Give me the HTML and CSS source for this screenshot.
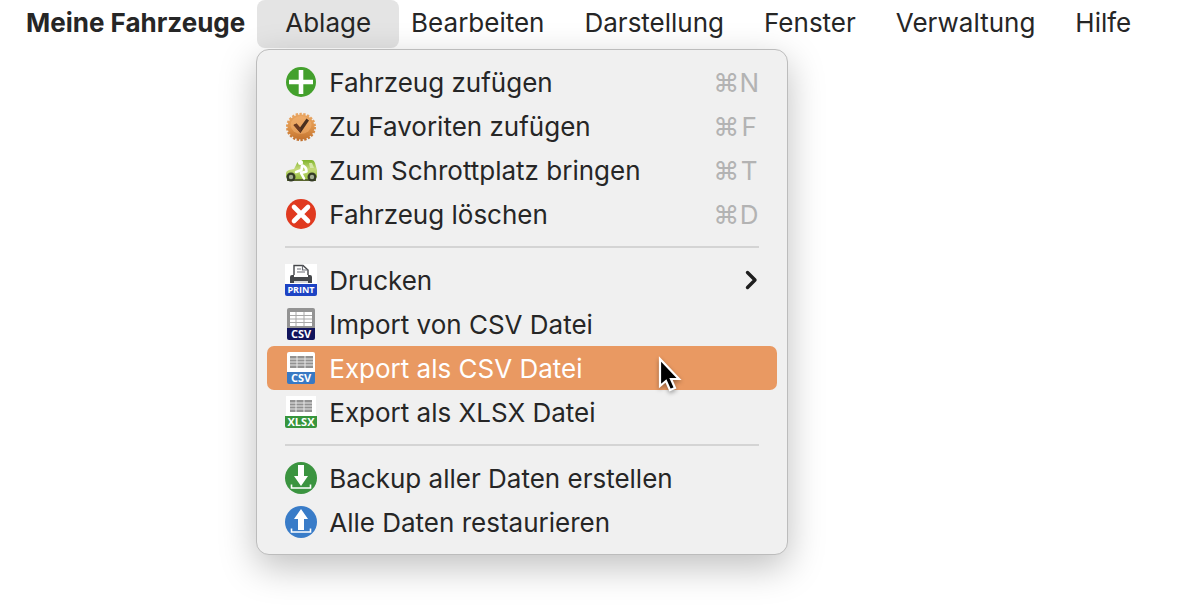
FILE: index.html
```
<!DOCTYPE html>
<html lang="de">
<head>
    <meta charset="UTF-8">
    <title>Meine Fahrzeuge</title>
    <link rel="stylesheet" href="styles.css">
</head>
<body>
    <nav class="menubar">
        <button class="menubar-item app-name">Meine Fahrzeuge</button>
        <div class="menu-anchor">
            <button class="menubar-item open" aria-haspopup="true" aria-expanded="true">Ablage</button>
            <div class="menu" role="menu">
                <button class="menu-item" role="menuitem">
                    <svg class="icon" viewBox="0 0 32 32" aria-hidden="true">
                        <circle cx="16" cy="16" r="15" fill="#43a02c"/>
                        <path d="M16 4v24M4 16h24" stroke="#fff" stroke-width="4.6"/>
                    </svg>
                    <span class="label">Fahrzeug zufügen</span>
                    <span class="shortcut"><span>⌘</span><span class="key">N</span></span>
                </button>
                <button class="menu-item" role="menuitem">
                    <svg class="icon" viewBox="0 0 32 32" aria-hidden="true">
                        <defs>
                            <linearGradient id="seal" gradientUnits="userSpaceOnUse" x1="0" y1="2" x2="0" y2="31">
                                <stop offset="0" stop-color="#eaa866"/>
                                <stop offset=".5" stop-color="#e0964c"/>
                                <stop offset="1" stop-color="#c06f2c"/>
                            </linearGradient>
                        </defs>
                        <ellipse cx="16" cy="17" rx="13.5" ry="12.5" fill="url(#seal)"/>
                        <ellipse cx="16" cy="17" rx="13.5" ry="12.7" fill="none" stroke="url(#seal)" stroke-width="3" stroke-dasharray="2.3 1.44"/>
                        <ellipse cx="16" cy="15" rx="10.5" ry="9" fill="#f3b473" opacity=".5"/>
                        <path d="M8.500 15l3-1.500 3.500 4 6.500-9 2.500 2-8.500 12.500z" fill="#49301f"/>
                        <path d="M8.500 15l3-1.500 3.500 4 1 3-.5 2.500z" fill="#6b3a22"/>
                    </svg>
                    <span class="label">Zu Favoriten zufügen</span>
                    <span class="shortcut"><span>⌘</span><span class="key">F</span></span>
                </button>
                <button class="menu-item" role="menuitem">
                    <svg class="icon" viewBox="0 0 32 32" aria-hidden="true">
                        <defs>
                            <linearGradient id="car" gradientUnits="userSpaceOnUse" x1="0" y1="6" x2="0" y2="26">
                                <stop offset="0" stop-color="#7fb32b"/>
                                <stop offset=".45" stop-color="#c5d97a"/>
                                <stop offset="1" stop-color="#94bd3c"/>
                            </linearGradient>
                        </defs>
                        <path d="M2 26h29" stroke="#59652f" stroke-width="2"/>
                        <path d="M1 23v-4q0-2 3-3l5-1 3-6q2-3 5-3h10q2 0 3 3l2 7v7l-2 2H3z" fill="url(#car)"/>
                        <path d="M24 9h3l2 5h-4z" fill="#d5e6a4"/>
                        <circle cx="15.500" cy="8.500" r="2.500" fill="#fff"/>
                        <path d="M17.500 11.500q4 1.500 4 6l-5.500 1.500 3 5.500M17 12l-.5 4-5.500 2" fill="none" stroke="#fff" stroke-width="2.600" stroke-linecap="round" stroke-linejoin="round"/>
                        <circle cx="6" cy="23" r="4.500" fill="#343b26"/>
                        <circle cx="27" cy="23" r="4.500" fill="#343b26"/>
                        <circle cx="6" cy="23" r="2.200" fill="#a3ae94"/>
                        <circle cx="27" cy="23" r="2.200" fill="#a3ae94"/>
                    </svg>
                    <span class="label">Zum Schrottplatz bringen</span>
                    <span class="shortcut"><span>⌘</span><span class="key">T</span></span>
                </button>
                <button class="menu-item" role="menuitem">
                    <svg class="icon" viewBox="0 0 32 32" aria-hidden="true">
                        <circle cx="16" cy="16" r="15" fill="#e03a20"/>
                        <path d="M9 9l14 14M23 9L9 23" stroke="#fff" stroke-width="4.600" stroke-linecap="round"/>
                    </svg>
                    <span class="label">Fahrzeug löschen</span>
                    <span class="shortcut"><span>⌘</span><span class="key">D</span></span>
                </button>

                <hr class="separator">

                <button class="menu-item" role="menuitem" aria-haspopup="true">
                    <svg class="icon" viewBox="0 0 32 32" aria-hidden="true">
                        <path d="M0 0h32v21H0z" fill="#fff"/>
                        <path d="M9 11V1.500h9l5 4.500v5" fill="#fff" stroke="#45474a" stroke-width="1.400"/>
                        <path d="M17.500 1.500V6H23M12 5h4M12 8h8" fill="none" stroke="#6a6c74" stroke-width="1.200"/>
                        <path d="M5 13q0-2 2-2h2v2h14v-2h2q2 0 2 2v6H5z" fill="#45474a"/>
                        <path d="M9 17h14v2H9z" fill="#d8d8d8"/>
                        <path d="M0 20h32v10q0 2-2 2H2q-2 0-2-2z" fill="#1d43c4"/>
                        <text class="tag print" x="16" y="29">PRINT</text>
                    </svg>
                    <span class="label">Drucken</span>
                    <svg class="chevron" viewBox="0 0 14 20" aria-hidden="true">
                        <path d="M2.500 2.500L10 10l-7.500 7.500" fill="none" stroke="#1f1f1f" stroke-width="3.400" stroke-linecap="round" stroke-linejoin="round"/>
                    </svg>
                </button>
                <button class="menu-item" role="menuitem">
                    <svg class="icon" viewBox="0 0 32 32" aria-hidden="true">
                        <path d="M2 21V2q0-2 2-2h24q2 0 2 2v19z" fill="#939393"/>
                        <path d="M5 4h22v14H5z" fill="#fff"/>
                        <path d="M5 7.500h22M5 11h22M5 14.500h22M11 4v14M19 4v14" stroke="#a8a8a8"/>
                        <path d="M2 20h28v10q0 2-2 2H4q-2 0-2-2z" fill="#11145c"/>
                        <text class="tag" x="16" y="30">CSV</text>
                    </svg>
                    <span class="label">Import von CSV Datei</span>
                </button>
                <button class="menu-item active" role="menuitem">
                    <svg class="icon" viewBox="0 0 32 32" aria-hidden="true">
                        <path d="M2 21V2q0-2 2-2h24q2 0 2 2v19z" fill="#fff"/>
                        <path d="M5 4h23v12H5z" fill="#929292"/>
                        <path d="M5 7h23M5 10h23M5 13h23M12 4v12M20 4v12" stroke="#e8e8e8"/>
                        <path d="M2 20h28v10q0 2-2 2H4q-2 0-2-2z" fill="#3879c4"/>
                        <text class="tag" x="16" y="30">CSV</text>
                    </svg>
                    <span class="label">Export als CSV Datei</span>
                    <svg class="cursor" viewBox="0 0 24 38" aria-hidden="true">
                        <path d="M2 3v27l6-5 4 9 5-2-4-9h8z" fill="#000" stroke="#fff" stroke-width="2.200"/>
                    </svg>
                </button>
                <button class="menu-item" role="menuitem">
                    <svg class="icon" viewBox="0 0 32 32" aria-hidden="true">
                        <path d="M1 0h30v21H1z" fill="#fff"/>
                        <path d="M5 4h22v12H5z" fill="#929292"/>
                        <path d="M5 7h22M5 10h22M5 13h22M11 4v12M19 4v12" stroke="#e8e8e8"/>
                        <path d="M0 20h32v10q0 2-2 2H2q-2 0-2-2z" fill="#37953c"/>
                        <text class="tag" x="16" y="30">XLSX</text>
                    </svg>
                    <span class="label">Export als XLSX Datei</span>
                </button>

                <hr class="separator">

                <button class="menu-item" role="menuitem">
                    <svg class="icon" viewBox="0 0 32 32" aria-hidden="true">
                        <circle cx="16" cy="16" r="16" fill="#3b9440"/>
                        <path d="M13 3h6v11h4l-7 10-7-10h4z" fill="#fff"/>
                        <path d="M6.500 22.500V26h19v-3.500" fill="none" stroke="#fff" stroke-width="1.600"/>
                    </svg>
                    <span class="label">Backup aller Daten erstellen</span>
                </button>
                <button class="menu-item" role="menuitem">
                    <svg class="icon" viewBox="0 0 32 32" aria-hidden="true">
                        <circle cx="16" cy="16" r="16" fill="#397cc8"/>
                        <path d="M16 3l7 10h-4v11h-6V13H9z" fill="#fff"/>
                        <path d="M6.500 22.500V26h19v-3.500" fill="none" stroke="#fff" stroke-width="1.600"/>
                    </svg>
                    <span class="label">Alle Daten restaurieren</span>
                </button>
            </div>
        </div>
        <button class="menubar-item">Bearbeiten</button>
        <button class="menubar-item">Darstellung</button>
        <button class="menubar-item">Fenster</button>
        <button class="menubar-item">Verwaltung</button>
        <button class="menubar-item">Hilfe</button>
    </nav>
</body>
</html>
```
FILE: styles.css
```
body {
    margin: 0;
    min-height: 100vh;
    background: #fff;
    color: #262626;
    font-family: Inter, "Liberation Sans", sans-serif;
    font-size: 26px;
}

button {
    border: none;
    background: none;
    color: inherit;
    font: inherit;
    white-space: nowrap;
}

.menubar {
    display: flex;
    padding-left: 6px;
}

.menubar-item {
    height: 48px;
    padding: 0 20px 4px;
}

.app-name {
    font-weight: 700;
}

.menu-anchor {
    position: relative;
    margin: 0 -8px;
}

.menubar-item.open {
    padding: 0 28px 4px;
    border-radius: 8px;
    background: #e4e4e4;
}

.menu {
    position: absolute;
    top: 49px;
    left: -1px;
    box-sizing: border-box;
    min-width: 532px;
    padding: 10px;
    border: 1px solid #bcbcbc;
    border-radius: 13px;
    background: #f0f0f0;
    box-shadow: 0 12px 36px rgba(0, 0, 0, 0.25);
}

.menu-item {
    position: relative;
    display: flex;
    align-items: center;
    gap: 12px;
    width: 100%;
    height: 44px;
    padding: 0 18px;
    border-radius: 7px;
    text-align: left;
}

.menu-item.active {
    background: #e99962;
    color: #fff;
}

.icon {
    flex: none;
    width: 32px;
    height: 32px;
}

.label {
    flex: 1;
}

.tag {
    fill: #fff;
    font-family: "Open Sans", sans-serif;
    font-size: 11px;
    font-weight: 700;
    text-anchor: middle;
}

.tag.print {
    font-size: 9px;
}

.shortcut {
    display: flex;
    color: #b3b3b3;
}

.key {
    width: 20px;
    text-align: center;
}

.chevron {
    width: 14px;
    height: 20px;
}

.separator {
    height: 2px;
    margin: 10px 18px;
    border: none;
    background: #d4d4d4;
}

.cursor {
    position: absolute;
    top: 10px;
    left: 391px;
    width: 24px;
    height: 38px;
    z-index: 1;
    filter: drop-shadow(0 2px 2px rgba(0, 0, 0, 0.35));
}
```
